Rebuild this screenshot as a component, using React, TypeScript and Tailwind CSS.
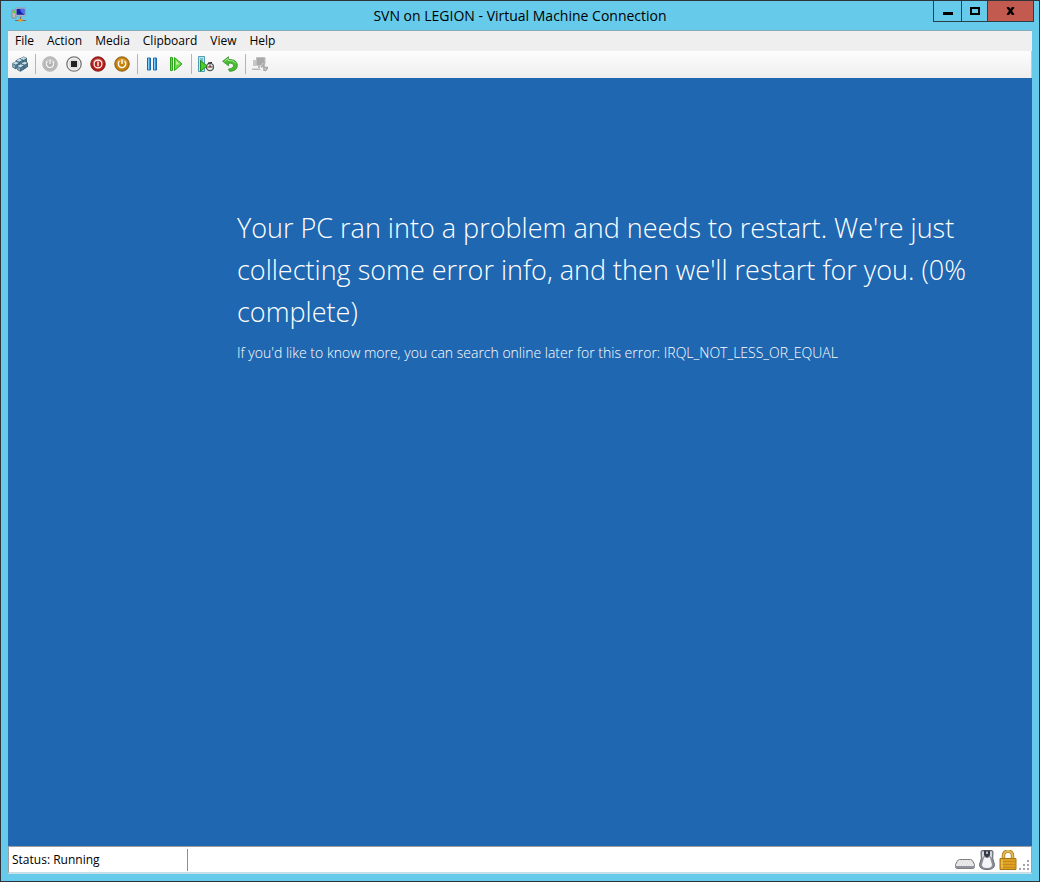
import type { ReactNode } from 'react';

interface ToolButtonProps {
  label: string;
  disabled?: boolean;
  children: ReactNode;
}

const MENU_ITEMS = ['File', 'Action', 'Media', 'Clipboard', 'View', 'Help'];

const POWER_PATH = 'M8 3.5v4.5M5.4 5.2a3.7 3.7 0 1 0 5.2 0';

function ToolButton({ label, disabled, children }: ToolButtonProps) {
  return (
    <button
      type="button"
      aria-label={label}
      title={label}
      disabled={disabled}
      className="flex h-6 w-6 items-center justify-center"
    >
      <svg viewBox="0 0 16 16" className="h-4 w-4">
        {children}
      </svg>
    </button>
  );
}

function Separator() {
  return (
    <div className="flex h-6 w-1.5 justify-center py-0.5">
      <div className="w-px bg-[#b4b4b4]" />
    </div>
  );
}

function Cube({ x, y }: { x: number; y: number }) {
  return (
    <g transform={`translate(${x} ${y})`}>
      <path d="M0 2 3.6 0 7 1.6 7 5.6 3.4 8 0 6z" fill="#375a70" />
      <path d="M.4 2.1 3.6.5 6.6 1.8 3.4 3.6z" fill="#c9dfe9" />
      <path d="M.5 2.8 3.1 4.1v3L.5 5.7z" fill="#83aabd" />
      <path d="M3.8 4.1 6.5 2.6v2.8L3.8 7.2z" fill="#4e7b94" />
    </g>
  );
}

function RoundIcon({ fill, ring, edge }: { fill: string; ring: string; edge: string }) {
  return (
    <>
      <circle cx="8" cy="8" r="7.3" fill={ring} stroke={edge} strokeWidth="0.8" />
      <circle cx="8" cy="8" r="6.2" fill={fill} />
      <path d="M2.4 7.2a5.7 5.7 0 0 1 11.2 0c-3-2-8-2-11.2 0z" fill="#fff" opacity="0.22" />
    </>
  );
}

function AppIcon() {
  return (
    <svg viewBox="0 0 16 16" className="h-4 w-4">
      <path d="M1 3h4v8H1z" fill="#b9bcb8" stroke="#777" strokeWidth="0.6" />
      <path d="M2 4h2v2H2z" fill="#3fdd20" />
      <path d="M4.5.8h10v8h-10z" fill="#c9cdd6" stroke="#8d939c" strokeWidth="0.6" />
      <path d="M5.5 1.8h8v6h-8z" fill="#1424a8" />
      <path d="M9 1.8h4.5v5.4C10.5 6.5 9.5 4.5 9 1.8z" fill="#4c70e8" />
      <path d="M8 9h3v2H8z" fill="#a2a39c" />
      <path d="M9.5 10v3M4 13.5h11" stroke="#776f5c" />
      <path d="M7.5 12h4v2.5h-4z" fill="#ef9a1c" />
    </svg>
  );
}

function TitleBar() {
  return (
    <header className="relative flex h-[29px] items-center justify-center">
      <div className="absolute left-2.5 top-1.5">
        <AppIcon />
      </div>
      <h1 className="text-sm text-black">SVN on LEGION - Virtual Machine Connection</h1>
      <div className="absolute right-[5px] top-0 flex h-[21px] gap-px border-x border-b border-[#2c3e48] bg-[#2c3e48]">
        <button
          type="button"
          aria-label="Minimize"
          className="flex w-[27px] items-center justify-center bg-[#66caea]"
        >
          <svg viewBox="0 0 10 10" className="h-2.5 w-2.5">
            <path d="M0 6h10v3H0z" />
          </svg>
        </button>
        <button
          type="button"
          aria-label="Maximize"
          className="flex w-[25px] items-center justify-center bg-[#66caea]"
        >
          <svg viewBox="0 0 10 8" className="h-2 w-2.5">
            <path d="M1 1h8v6H1z" fill="none" stroke="#000" strokeWidth="2" />
          </svg>
        </button>
        <button
          type="button"
          aria-label="Close"
          className="flex w-[45px] items-center justify-center bg-[#c35a50]"
        >
          <svg viewBox="0 0 9 8" className="h-2 w-[9px]">
            <path d="M1.5 0l6 8M7.5 0l-6 8" stroke="#000" strokeWidth="2.4" />
          </svg>
        </button>
      </div>
    </header>
  );
}

function MenuBar() {
  return (
    <nav className="flex h-[21px] items-center gap-px border-t border-[#86a9b8] bg-[#efefef] pl-px">
      {MENU_ITEMS.map((item) => (
        <button key={item} type="button" className="px-1.5 text-xs leading-5 text-black">
          {item}
        </button>
      ))}
    </nav>
  );
}

function Toolbar() {
  return (
    <div
      role="toolbar"
      className="flex h-[27px] items-center border-r border-[#c8c8c8] bg-linear-to-b from-[#fdfdfd] to-[#eeeeee] pb-0.5"
    >
      <ToolButton label="Ctrl+Alt+Delete">
        <Cube x={8} y={0.5} />
        <Cube x={3.8} y={2.2} />
        <Cube x={0.3} y={5.2} />
        <Cube x={9} y={5.2} />
        <Cube x={5} y={7.8} />
      </ToolButton>
      <Separator />
      <ToolButton label="Start" disabled>
        <RoundIcon fill="#b3b3b3" ring="#c4c4c4" edge="#aaaaaa" />
        <path d={POWER_PATH} fill="none" stroke="#f2f2f2" strokeWidth="1.3" />
      </ToolButton>
      <ToolButton label="Turn off">
        <circle cx="8" cy="8" r="7.2" fill="#f8f8f8" stroke="#777" strokeWidth="1.3" />
        <circle cx="8" cy="8" r="5.5" fill="#dedede" />
        <path d="M5 5h6v6H5z" fill="#222" />
      </ToolButton>
      <ToolButton label="Shut down">
        <RoundIcon fill="#b8201a" ring="#a61a15" edge="#77201c" />
        <circle cx="8" cy="8" r="3.9" fill="none" stroke="#fff" strokeWidth="1.2" />
        <path d="M8 5.8v4.4" stroke="#fff" strokeWidth="1.4" />
      </ToolButton>
      <ToolButton label="Save">
        <RoundIcon fill="#c98208" ring="#b57305" edge="#80601f" />
        <path d={POWER_PATH} fill="none" stroke="#fff" strokeWidth="1.4" />
      </ToolButton>
      <Separator />
      <ToolButton label="Pause">
        <path d="M3.5 2h3v12h-3zM9.5 2h3v12h-3z" fill="#2fa0e8" stroke="#1d68a8" />
        <path d="M4.5 2.5v11M10.5 2.5v11" stroke="#7fcdf8" />
      </ToolButton>
      <ToolButton label="Reset">
        <path d="M2.5 1.5h2v13h-2zM6.5 1.5 14 8l-7.5 6.5z" fill="#69d943" stroke="#2fa51d" />
        <path d="M8 4.5 11.5 8 8 9z" fill="#b5f29b" />
      </ToolButton>
      <Separator />
      <ToolButton label="Checkpoint">
        <path d="M.5.5h6v15h-6z" fill="#bfe4ec" stroke="#4c9fb4" />
        <path d="M2 3h3M2 5h3M2 13h3" stroke="#4593a8" />
        <circle cx="12" cy="11" r="3.6" fill="#eee" stroke="#555" strokeWidth="1.4" />
        <path d="M10 7l4-.5M12 8.5V11h2.5" fill="none" stroke="#222" />
        <path d="M9.5 11H12" stroke="#c13e32" strokeWidth="1.4" />
        <path d="M2.5 4.5 9 10l-6.5 5.2z" fill="#4fce2b" stroke="#218e19" />
      </ToolButton>
      <ToolButton label="Revert">
        <path
          d="M6.5.8.7 5.3l5.8 4.5V7.2c3.2-.3 5 .4 5 2.5 0 1.8-1.7 3-5 3.3l1 2.3c4.8 0 7.800-2.300 7.800-5.900 0-4-3.300-6.100-8.800-5.900z"
          fill="#49bd30"
          stroke="#2e8e24"
          strokeWidth="0.8"
        />
        <path d="M2.5 5.2 6 2.5v1.900c4 0 6.500.8 7.600 3" fill="none" stroke="#a6e58e" />
      </ToolButton>
      <Separator />
      <ToolButton label="Enhanced session" disabled>
        <path d="M4.5 1.5h8.500v8h-8.500z" fill="#a9a9a9" stroke="#c0c0c0" />
        <path d="M1 4h3v6H1z" fill="#c6c6c6" />
        <path d="M6 10h3v2H6zM0 12.500h9v1.500H0z" fill="#b9b9b9" />
        <path d="M12 7.500v8.500M8 11.500h8" stroke="#f3f3f3" strokeWidth="4" />
        <path d="M9 11.500 12 8v7M11 11.500h5L13 15" fill="none" stroke="#a6a6a6" strokeWidth="1.500" />
      </ToolButton>
    </div>
  );
}

function GuestScreen() {
  return (
    <main className="flex-1 bg-[#2067b2] pl-[229px] pr-12 pt-[129px] text-white">
      <p className="text-[27px] font-light leading-[42px]">
        Your PC ran into a problem and needs to restart. We're just collecting some error info, and
        then we'll restart for you. (0% complete)
      </p>
      <p className="mt-2.5 text-sm font-light">
        If you'd like to know more, you can search online later for this error:
        IRQL_NOT_LESS_OR_EQUAL
      </p>
    </main>
  );
}

function StatusBar() {
  return (
    <footer className="relative flex h-7 items-center border border-b-2 border-[#a0a0a0] border-b-[#c9dfe7] bg-white text-xs text-black">
      <div className="flex h-[22px] w-[179px] items-center border-r border-[#909090] pl-[3px]">
        Status: Running
      </div>
      <div className="ml-auto flex items-end gap-1 pr-3.5">
        <svg viewBox="0 0 20 20" className="h-5 w-5">
          <path
            d="M4.5 9.5h11q1.5 0 2.5 2l1.5 3v2q0 2-1.5 2H2q-1.5 0-1.5-2v-2l1.500-3q1-2 2.500-2z"
            fill="#dcdcdc"
            stroke="#808080"
          />
          <path d="M4 11h12M3 13h14M2 15h16" stroke="#fff" strokeDasharray="1.5 1" />
          <path d="M1 17h18" stroke="#9092a0" strokeWidth="2" />
        </svg>
        <svg viewBox="0 0 16 20" className="h-5 w-4">
          <path
            d="M3 .5h10q1 0 1 2l-.3 6 1.800 6q0 5-7.500 5t-7.500-5l1.800-6L2 2.500q0-2 1-2z"
            fill="#8c9099"
            stroke="#666a74"
          />
          <path d="M5 7.500h6q1 4 2 7 0 3.500-5 3.500t-5-3.500q1-3 2-7z" fill="#f3f4f7" />
          <path d="M3 1.500h2v4.500L3 8zM13 1.500h-2v4.500l2 2z" fill="#d5d7dd" />
          <path d="M5 .5h6V5L8 8 5 5z" fill="#343946" />
          <path d="M8 1.5V4" stroke="#dde0e8" strokeWidth="1.5" />
        </svg>
        <svg viewBox="0 0 18 20" className="h-5 w-[18px]">
          <path d="M4.5 9V5.5a4.5 4.5 0 0 1 9 0V9" fill="none" stroke="#a87c1e" strokeWidth="3.5" />
          <path d="M4.5 9V5.5a4.5 4.5 0 0 1 9 0V9" fill="none" stroke="#e9bf55" strokeWidth="1.8" />
          <path d="M1 8.5h16v11H1z" fill="#dda022" stroke="#a87416" />
          <path d="M2 11.500h14M2 14.500h14M2 17.500h14" stroke="#c58a18" />
          <path d="M3 9.500v9" stroke="#f7d679" />
        </svg>
      </div>
      <svg viewBox="0 0 10 10" className="absolute bottom-0.5 right-0.5 h-2.5 w-2.5">
        <path
          d="M8 0h2v2H8zM4 4h2v2H4zM8 4h2v2H8zM0 8h2v2H0zM4 8h2v2H4zM8 8h2v2H8z"
          fill="#a5a5a5"
        />
      </svg>
    </footer>
  );
}

export default function App() {
  return (
    <div className="flex min-h-screen flex-col border border-[#30343a] bg-[#66caea] font-['Open_Sans',sans-serif]">
      <TitleBar />
      <div className="mx-[7px] mb-[7px] flex flex-1 flex-col">
        <MenuBar />
        <Toolbar />
        <GuestScreen />
        <StatusBar />
      </div>
    </div>
  );
}
